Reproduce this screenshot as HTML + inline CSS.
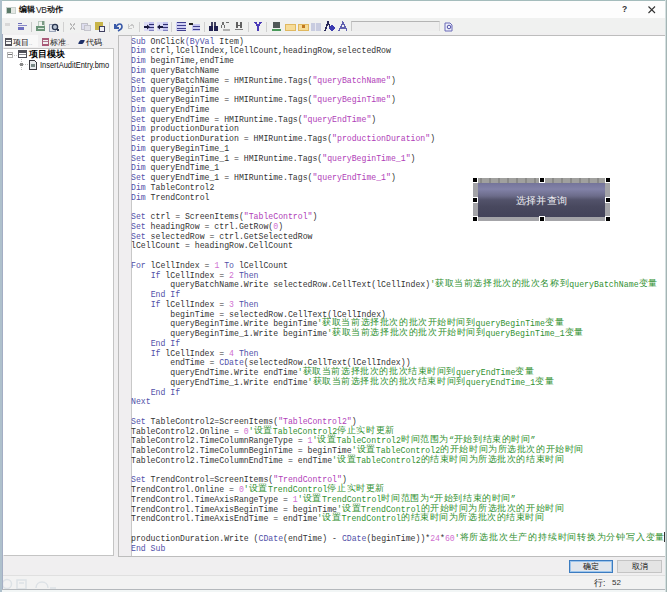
<!DOCTYPE html>
<html><head><meta charset="utf-8">
<style>
*{margin:0;padding:0;box-sizing:border-box}
html,body{width:667px;height:592px;overflow:hidden;background:#f0f0f0;font-family:"Liberation Sans",sans-serif}
.a{position:absolute}
#win{position:absolute;left:0;top:0;width:667px;height:592px;background:#f0eff0}
#title{left:0;top:0;width:667px;height:18px;background:#fdfdfd}
#tb{left:0;top:18px;width:667px;height:15px;background:#f0f1f0}
#code{left:118px;top:35px;width:547px;height:522px;background:#fff;border:1px solid #bdbdbd;border-right:0;overflow:hidden}
#gut{left:0;top:0;width:13px;height:100%;background:#f0eef0;border-right:1px solid #c8c8c8}
#lines{left:12px;top:0.5px;font-family:"Liberation Mono",monospace;font-size:8.18px;line-height:9.76px;color:#333;white-space:pre}
.l{height:9.76px}
.k{color:#5050a8}
.s{color:#b040b8}
.n{color:#d070d0}
.c{color:#2f8f2f}
i{font-style:normal;font-family:"Liberation Sans",sans-serif;font-size:9px;letter-spacing:0.58px;position:relative;top:-1px;font-weight:500}
.c{letter-spacing:0.05px}
.c3 i{letter-spacing:0.78px}
#tree{left:3px;top:48px;width:111px;height:508px;background:#fff;border:1px solid #c4c4c4;border-left-color:#fff}
#btnw{left:473px;top:178px;width:137px;height:43px;background:#a4a4a8}
#btni{left:478px;top:183px;width:127px;height:34px;background:linear-gradient(#74749a 0,#8282a8 18%,#6c6c8a 38%,#52526a 50%,#48485e 70%,#43435a 100%);color:#f0f0f6;font-size:10px;text-align:center;line-height:35px;letter-spacing:0.1px;font-weight:500}
.h{width:4px;height:4px;background:#000;outline:1px solid #fff}
#ok{left:569px;top:560px;width:44px;height:13px;background:#e1e6ec;border:1px solid #3c7cc0;box-shadow:inset 0 0 0 1px #9cc4ec;font-size:8px;text-align:center;line-height:11px;color:#111;font-weight:500}
#cancel{left:617px;top:560px;width:45px;height:13px;background:#e4e4e4;border:1px solid #c4c4c4;font-size:8px;text-align:center;line-height:11px;color:#111;font-weight:500}
#status{left:2px;top:575px;width:663px;height:14px;background:#f2f2f2;border-top:1px solid #e0e0e0}
</style></head><body>
<div id="win"></div>
<div class="a" id="title"></div>

<div class="a" style="left:6px;top:7px;width:10px;height:7px;background:#e4e8e4;border:1px solid #c8d0cc"></div>
<div class="a" style="left:7px;top:8px;width:4px;height:5px;background:#5a7a68"></div>
<div class="a" style="left:19px;top:4px;font-size:8px;color:#111;line-height:12px;font-weight:700">编辑</div>
<div class="a" style="left:36px;top:4px;font-size:8.5px;color:#222;line-height:12px;letter-spacing:-0.3px">VB</div>
<div class="a" style="left:47px;top:4px;font-size:8px;color:#111;line-height:12px;font-weight:700">动作</div>
<div class="a" style="left:622px;top:3px;font-size:8.5px;font-weight:bold;color:#333;line-height:12px">?</div>
<svg class="a" style="left:647px;top:5px" width="10" height="9"><path d="M1.5 1.5 L8 8 M8 1.5 L1.5 8" stroke="#333" stroke-width="1.1"/></svg>
<div class="a" id="tb"></div>

<div class="a" id="search" style="left:351px;top:21px;width:89px;height:10px;background:#eeeeee;border-top:1px solid #b4b4b4;border-left:1px solid #c8c8c8;border-right:1px solid #dcdcdc"></div>

<svg class="a" style="left:0;top:17px" width="460" height="18" viewBox="0 17 460 18">
<g shape-rendering="crispEdges">
<rect x="5" y="23" width="5" height="3" fill="#d8d8d8"/>
<rect x="18" y="23" width="4" height="1" fill="#6a6ab8"/>
<rect x="18" y="25" width="9" height="1" fill="#8a8ac8"/>
<rect x="18" y="27" width="6" height="3" fill="#7070c0"/>
<rect x="31" y="22" width="1" height="10" fill="#c8c8c8"/>
<rect x="38" y="21" width="6" height="5" fill="#eef2ee" stroke="#b8c8bc" stroke-width="1"/>
<rect x="42" y="21" width="2" height="4" fill="#7a9a84"/>
<rect x="36" y="26" width="9" height="5" fill="#6a9478"/>
<rect x="38" y="28" width="6" height="1" fill="#d8e8dc"/>
<rect x="49" y="24" width="6" height="7" fill="#e4e8f0" stroke="#9aa4b8" stroke-width="1"/>
<circle cx="55" cy="27" r="2.6" fill="#b8c4d4" stroke="#2a3650" stroke-width="1.3" shape-rendering="auto"/>
<path d="M57 29 L59 31" stroke="#2a3650" stroke-width="1.5"/>
<rect x="63" y="22" width="1" height="10" fill="#d0d0d0"/>
<path d="M70 23 L75 30 M75 23 L70 30" stroke="#b8b8b8" stroke-width="1"/>
<rect x="81" y="23" width="6" height="6" fill="#dde" stroke="#c0c0c8"/>
<rect x="84" y="25" width="6" height="5" fill="#e0e0e8" stroke="#c4c4cc"/>
<rect x="95" y="22" width="8" height="8" fill="#c8b448"/>
<rect x="99" y="26" width="5" height="5" fill="#f0f0f8" stroke="#404060"/>
<rect x="109" y="22" width="1" height="10" fill="#d0d0d0"/>
<path d="M115 24 L115 28 L119 28" stroke="#3a5aa8" stroke-width="1.6" fill="none"/>
<path d="M116 27 C118 23 122 23 122 27 C122 29 120 30 118 31" stroke="#3a5aa8" stroke-width="1.6" fill="none" shape-rendering="auto"/>
<path d="M128 24 L128 28 L132 28 M129 27 C131 24 134 24 134 28" stroke="#c8c8c8" stroke-width="1" fill="none"/>
<rect x="139" y="22" width="1" height="10" fill="#d0d0d0"/>
<rect x="144" y="22" width="10" height="9" fill="#dcdcf6"/><rect x="149" y="22" width="5" height="9" fill="#c0c0ee"/>
<rect x="149" y="24" width="5" height="1" fill="#303070"/>
<rect x="149" y="27" width="5" height="1" fill="#303070"/>
<rect x="149" y="30" width="5" height="1" fill="#8080c0"/>
<rect x="144" y="26" width="4" height="2" fill="#1a1a40"/><path d="M147 24.5 L150 27 L147 29.5 Z" fill="#1a1a40" shape-rendering="auto"/>
<rect x="157" y="22" width="11" height="9" fill="#dcdcf6"/><rect x="163" y="22" width="5" height="9" fill="#c0c0ee"/>
<rect x="163" y="24" width="5" height="1" fill="#303070"/>
<rect x="163" y="27" width="5" height="1" fill="#303070"/>
<rect x="163" y="30" width="5" height="1" fill="#8080c0"/>
<rect x="159" y="26" width="4" height="2" fill="#1a1a40"/><path d="M160 24.5 L157 27 L160 29.5 Z" fill="#1a1a40" shape-rendering="auto"/>
<rect x="171" y="22" width="1" height="10" fill="#d0d0d0"/>
<rect x="176" y="22" width="10" height="9" fill="#d0d0f4"/>
<rect x="177" y="22" width="9" height="1" fill="#404090"/>
<rect x="177" y="25" width="9" height="1" fill="#404090"/>
<rect x="177" y="28" width="9" height="1" fill="#404090"/>
<rect x="177" y="30" width="9" height="1" fill="#404090"/>
<rect x="192" y="24" width="8" height="7" fill="#c8c8f0"/>
<rect x="193" y="26" width="7" height="1" fill="#404090"/>
<rect x="193" y="29" width="7" height="1" fill="#404090"/>
<rect x="189" y="23" width="4" height="2" fill="#222"/>
<rect x="204" y="22" width="1" height="10" fill="#d0d0d0"/>
<rect x="209" y="26" width="4" height="5" fill="#202050"/>
<rect x="214" y="26" width="4" height="5" fill="#202050"/>
<rect x="211" y="22" width="2" height="4" fill="#404060"/>
<rect x="214" y="22" width="2" height="4" fill="#404060"/>
<path d="M221 28 L223 22 L225 28 M226 22 L229 22" stroke="#707070" stroke-width="1" fill="none"/>
<rect x="223" y="29" width="7" height="2" fill="#b0b0b0"/>
<rect x="236" y="22" width="2" height="6" fill="#606060"/>
<rect x="240" y="22" width="2" height="6" fill="#606060"/>
<rect x="236" y="25" width="6" height="1" fill="#606060"/>
<rect x="235" y="29" width="8" height="1" fill="#808080"/>
<rect x="248" y="22" width="1" height="10" fill="#d0d0d0"/>
<path d="M255 22 L258 26 L261 22 M258 26 L258 31" stroke="#4a3ab8" stroke-width="2" fill="none"/>
<rect x="266" y="22" width="1" height="10" fill="#d0d0d0"/>
<rect x="273" y="22" width="7" height="6" fill="#505858"/>
<rect x="272" y="29" width="9" height="2" fill="#4a9a5a"/>
<rect x="285" y="24" width="10" height="6" fill="#f6dc98" stroke="#e0b860"/>
<rect x="298" y="24" width="10" height="6" fill="#f6dc98" stroke="#e0b860"/>
<rect x="302" y="25" width="3" height="3" fill="#c07820"/>
<rect x="311" y="23" width="10" height="8" fill="#c8cce0"/>
<rect x="315" y="23" width="1" height="8" fill="#e8e8f0"/>
<path d="M325 31 L328 22 L331 29" stroke="#2a2a5a" stroke-width="1.5" fill="none"/>
<circle cx="332" cy="28" r="2.6" fill="#3a3ab0"/>
<path d="M339 31 L343 22 L347 31 M341 28 L345 28" stroke="#6060b0" stroke-width="1.3" fill="none"/>
</g>
<path d="M445 23 h5 l2 2 v6 h-7 z" fill="#eef0fa" stroke="#6a6ab8" stroke-width="1"/><circle cx="449" cy="27" r="1.8" fill="none" stroke="#5050a8" stroke-width="1"/>
</svg>
<!-- tabs -->
<div class="a" style="left:3px;top:35px;width:35px;height:12px;background:#f8f8f8"></div>
<div class="a" style="left:5px;top:37.5px;width:7px;height:8px;border:1px solid #505058;border-top-width:2px;border-bottom-width:2px"></div>
<div class="a" style="left:6px;top:40.5px;width:5px;height:1px;background:#707078"></div>
<div class="a" style="left:13px;top:36.5px;font-size:8px;color:#111;line-height:12px;font-weight:500">项目<span style="font-size:6px;color:#999">..</span></div>
<div class="a" style="left:42px;top:37.5px;width:7px;height:8px;border:1px solid #a85a78;border-top-width:2px;border-bottom-width:2px"></div>
<div class="a" style="left:43px;top:40.5px;width:5px;height:1px;background:#b07890"></div>
<div class="a" style="left:50px;top:36.5px;font-size:8px;color:#222;line-height:12px;font-weight:500">标准<span style="font-size:6px;color:#999">..</span></div>
<div class="a" style="left:79px;top:40px;width:5px;height:4px;background:#1e3068;transform:skewX(-30deg);border-radius:1px"></div>
<div class="a" style="left:86px;top:36.5px;font-size:8px;color:#111;line-height:12px;font-weight:500">代码<span style="font-size:6px;color:#999">.</span></div>

<div class="a" id="tree">
 <div class="a" style="left:3px;top:3px;width:6px;height:6px;border:1px solid #b4b4b4"></div>
 <div class="a" style="left:4px;top:5px;width:4px;height:1px;background:#777"></div>
 <svg class="a" style="left:0;top:0" width="40" height="24" shape-rendering="crispEdges">
  <path d="M10 6 h4" stroke="#c8c8c8" stroke-dasharray="1 1"/>
  <rect x="14.5" y="1.5" width="8" height="7" fill="#fff" stroke="#505058"/>
  <rect x="15" y="2" width="7" height="2" fill="#505058"/>
  <rect x="15" y="5" width="7" height="1" fill="#8a8a90"/>
  <path d="M17.5 10 v11" stroke="#c0c0c0" stroke-dasharray="1 1"/>
  <path d="M15 15.5 h9" stroke="#c0c0c0" stroke-dasharray="1 1"/>
  <rect x="16" y="14" width="3" height="3" fill="#888"/>
  <path d="M25.5 11.5 h5 l2 2 v7 h-7 z" fill="#e8ecee" stroke="#3a3a40"/>
  <rect x="27" y="15" width="4" height="3" fill="#7a8a88"/>
 </svg>
 <div class="a" style="left:25px;top:-1px;font-size:8.5px;font-weight:bold;color:#000;line-height:12px">项目模块</div>
 <div class="a" style="left:36px;top:10px;font-size:9px;transform:scaleX(0.83);transform-origin:0 0;color:#111;line-height:12px">InsertAuditEntry.bmo</div>
</div>

<div class="a" id="code">
 <div class="a" id="gut"></div>
 <div class="a" id="lines"><div class="l"><span class="k">Sub</span> OnClick<span class="k">(ByVal</span> Item)</div><div class="l"><span class="k">Dim</span> ctrl,lCellIndex,lCellCount,headingRow,selectedRow</div><div class="l"><span class="k">Dim</span> beginTime,endTime</div><div class="l"><span class="k">Dim</span> queryBatchName</div><div class="l"><span class="k">Set</span> queryBatchName = HMIRuntime.Tags(<span class="s">"queryBatchName"</span>)</div><div class="l"><span class="k">Dim</span> queryBeginTime</div><div class="l"><span class="k">Set</span> queryBeginTime = HMIRuntime.Tags(<span class="s">"queryBeginTime"</span>)</div><div class="l"><span class="k">Dim</span> queryEndTime</div><div class="l"><span class="k">Set</span> queryEndTime = HMIRuntime.Tags(<span class="s">"queryEndTime"</span>)</div><div class="l"><span class="k">Dim</span> productionDuration</div><div class="l"><span class="k">Set</span> productionDuration = HMIRuntime.Tags(<span class="s">"productionDuration"</span>)</div><div class="l"><span class="k">Dim</span> queryBeginTime_1</div><div class="l"><span class="k">Set</span> queryBeginTime_1 = HMIRuntime.Tags(<span class="s">"queryBeginTime_1"</span>)</div><div class="l"><span class="k">Dim</span> queryEndTime_1</div><div class="l"><span class="k">Set</span> queryEndTime_1 = HMIRuntime.Tags(<span class="s">"queryEndTime_1"</span>)</div><div class="l"><span class="k">Dim</span> TableControl2</div><div class="l"><span class="k">Dim</span> TrendControl</div><div class="l"></div><div class="l"><span class="k">Set</span> ctrl = ScreenItems(<span class="s">"TableControl"</span>)</div><div class="l"><span class="k">Set</span> headingRow = ctrl.GetRow(<span class="n">0</span>)</div><div class="l"><span class="k">Set</span> selectedRow = ctrl.GetSelectedRow</div><div class="l">lCellCount = headingRow.CellCount</div><div class="l"></div><div class="l"><span class="k">For</span> lCellIndex = <span class="n">1</span><span class="k"> To</span> lCellCount</div><div class="l">    <span class="k">If</span> lCellIndex = <span class="n">2</span><span class="k"> Then</span></div><div class="l">        queryBatchName.Write selectedRow.CellText(lCellIndex)<span class="c">'<i>获取当前选择批次的批次名称到</i>queryBatchName<i>变量</i></span></div><div class="l">    <span class="k">End If</span></div><div class="l">    <span class="k">If</span> lCellIndex = <span class="n">3</span><span class="k"> Then</span></div><div class="l">        beginTime = selectedRow.CellText(lCellIndex)</div><div class="l">        queryBeginTime.Write beginTime<span class="c">'<i>获取当前选择批次的批次开始时间到</i>queryBeginTime<i>变量</i></span></div><div class="l">        queryBeginTime_1.Write beginTime<span class="c">'<i>获取当前选择批次的批次开始时间到</i>queryBeginTime_1<i>变量</i></span></div><div class="l">    <span class="k">End If</span></div><div class="l">    <span class="k">If</span> lCellIndex = <span class="n">4</span><span class="k"> Then</span></div><div class="l">        endTime = <span class="k">CDate</span>(selectedRow.CellText(lCellIndex))</div><div class="l">        queryEndTime.Write endTime<span class="c">'<i>获取当前选择批次的批次结束时间到</i>queryEndTime<i>变量</i></span></div><div class="l">        queryEndTime_1.Write endTime<span class="c">'<i>获取当前选择批次的批次结束时间到</i>queryEndTime_1<i>变量</i></span></div><div class="l">    <span class="k">End If</span></div><div class="l"><span class="k">Next</span></div><div class="l"></div><div class="l"><span class="k">Set</span> TableControl2=ScreenItems(<span class="s">"TableControl2"</span>)</div><div class="l">TableControl2.Online = <span class="n">0</span><span class="c">'<i>设置</i>TableControl2<i>停止实时更新</i></span></div><div class="l">TableControl2.TimeColumnRangeType = <span class="n">1</span><span class="c">'<i>设置</i>TableControl2<i>时间范围为</i>“<i>开始到结束的时间</i>”</span></div><div class="l">TableControl2.TimeColumnBeginTime = beginTime<span class="c">'<i>设置</i>TableControl2<i>的开始时间为所选批次的开始时间</i></span></div><div class="l">TableControl2.TimeColumnEndTime = endTime<span class="c">'<i>设置</i>TableControl2<i>的结束时间为所选批次的结束时间</i></span></div><div class="l"></div><div class="l"><span class="k">Set</span> TrendControl=ScreenItems(<span class="s">"TrendControl"</span>)</div><div class="l">TrendControl.Online = <span class="n">0</span><span class="c">'<i>设置</i>TrendControl<i>停止实时更新</i></span></div><div class="l">TrendControl.TimeAxisRangeType = <span class="n">1</span><span class="c">'<i>设置</i>TrendControl<i>时间范围为</i>“<i>开始到结束的时间</i>”</span></div><div class="l">TrendControl.TimeAxisBeginTime = beginTime<span class="c">'<i>设置</i>TrendControl<i>的开始时间为所选批次的开始时间</i></span></div><div class="l">TrendControl.TimeAxisEndTime = endTime<span class="c">'<i>设置</i>TrendControl<i>的结束时间为所选批次的结束时间</i></span></div><div class="l"></div><div class="l">productionDuration.Write (<span class="k">CDate</span>(endTime) - <span class="k">CDate</span>(beginTime))*<span class="n">24</span>*<span class="n">60</span><span class="c c3">'<i>将所选批次生产的持续时间转换为分钟写入变量</i></span></div><div class="l"><span class="k">End Sub</span></div></div>
</div>

<div class="a" id="btnw"></div>
<div class="a" style="left:473px;top:178px;width:137px;height:5px;background:repeating-linear-gradient(90deg,#a0a09e 0,#a0a09e 7px,#8a8a88 7px,#8a8a88 9px)"></div>
<div class="a" id="btni">选择并查询</div>
<div class="a h" style="left:473px;top:178px"></div>
<div class="a h" style="left:540px;top:178px"></div>
<div class="a h" style="left:606px;top:178px"></div>
<div class="a h" style="left:473px;top:198px"></div>
<div class="a h" style="left:606px;top:198px"></div>
<div class="a h" style="left:473px;top:217px"></div>
<div class="a h" style="left:540px;top:217px"></div>
<div class="a h" style="left:606px;top:217px"></div>

<div class="a" id="status"></div>
<div class="a" style="left:664px;top:532px;width:1px;height:10px;background:#333"></div>
<svg class="a" style="left:0;top:576px" width="70" height="14"><g fill="none" stroke="#dde2e6" stroke-width="1.5"><circle cx="7" cy="8" r="4.5"/><path d="M17 4 h9 v9 h-9 z M19 7 h5"/><path d="M36 12 C36 4 48 4 48 12 M50 12 h6"/></g></svg>
<div class="a" id="ok">确定</div>
<div class="a" id="cancel">取消</div>
<div class="a" style="left:594px;top:577px;font-size:8.5px;color:#333;line-height:12px">行:</div><div class="a" style="left:612px;top:577px;font-size:8px;color:#333;line-height:12px">52</div>
<div class="a" style="left:0;top:0;width:667px;height:1px;background:#a4bcbc"></div>
<div class="a" style="left:0;top:0;width:2px;height:592px;background:#aec0cc"></div>
<div class="a" style="left:2px;top:34px;width:1px;height:556px;background:#a4aec4"></div>
<div class="a" style="left:665px;top:0;width:1px;height:592px;background:#d4e0e0"></div><div class="a" style="left:666px;top:0;width:1px;height:592px;background:#a4b4b4"></div>
<div class="a" style="left:2px;top:589px;width:663px;height:1px;background:#b4b8bc"></div>
<div class="a" style="left:2px;top:590px;width:663px;height:2px;background:#f2f6f6"></div>
</body></html>
